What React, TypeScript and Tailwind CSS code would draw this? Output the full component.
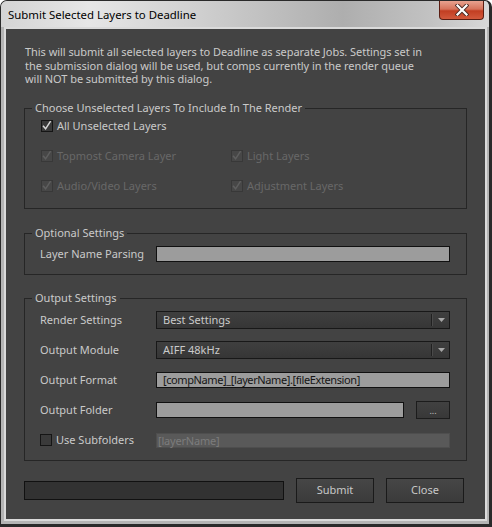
import React from "react";

function Check({ checked, disabled }: { checked?: boolean; disabled?: boolean }) {
  return (
    <span
      className={
        disabled
          ? "flex h-[12px] w-[12px] shrink-0 items-center justify-center border border-[#383838] bg-[#474747]"
          : "flex h-[12px] w-[12px] shrink-0 items-center justify-center border border-[#151515] bg-[#3a3a3a]"
      }
    >
      {checked && (
        <svg width="12" height="12" viewBox="0 0 12 12" className="overflow-visible">
          <path
            d="M2 5.8 L4.6 8.8 L9.6 1.2"
            fill="none"
            stroke={disabled ? "#5f5f5f" : "#d8d8d8"}
            strokeWidth="1.5"
          />
        </svg>
      )}
    </span>
  );
}

function CheckRow({ label, checked, disabled }: { label: string; checked?: boolean; disabled?: boolean }) {
  return (
    <div className="flex h-[16px] items-center gap-[4px]">
      <Check checked={checked} disabled={disabled} />
      <span className={disabled ? "text-[#686868]" : "text-[#cacaca]"}>{label}</span>
    </div>
  );
}

function Select({ value }: { value: string }) {
  return (
    <div className="flex h-[18px] flex-1 items-center border border-[#181818] bg-[linear-gradient(#3f3f3f,#363636)]">
      <span className="flex-1 pl-[6px] text-[#cacaca]">{value}</span>
      <span className="h-[12px] w-px bg-[#202020]" />
      <span className="h-[12px] w-px bg-[#4a4a4a]" />
      <span className="flex w-[16px] justify-center">
        <svg width="7" height="4" viewBox="0 0 7 4">
          <path d="M0 0 H7 L3.5 4 Z" fill="#a6a6a6" />
        </svg>
      </span>
    </div>
  );
}

function Group({ title, children }: { title: string; children: React.ReactNode }) {
  return (
    <fieldset className="border border-[#262626] p-0">
      <legend className="ml-[7px] px-[3px] leading-[14px] text-[#cacaca]">{title}</legend>
      {children}
    </fieldset>
  );
}

function Label({ children }: { children: React.ReactNode }) {
  return <span className="w-[116px] shrink-0 text-[#cacaca]">{children}</span>;
}

export default function App() {
  return (
    <div className="h-[527px] w-[492px] overflow-hidden rounded-t-[7px] border-x border-t border-b-[3px] border-r-[3px] border-[#2a2a2a] bg-[#b4b4b4] pb-[3px] pl-[3px] pr-[2px] font-['Noto_Sans',sans-serif] text-[11px]">
      <div className="-mx-[3px] -mr-[2px] flex h-[26px] items-start justify-between bg-[linear-gradient(to_right,#d4d4d4,#e6e6e6_18%,#d0d0d0_40%,#aeaeae_70%,#c2c2c2_88%,#d8d8d8)] pl-[7px] pr-[5px]">
        <span className="pt-[6px] text-[11.4px] leading-[16px] text-black">Submit Selected Layers to Deadline</span>
        <div className="flex h-[19px] w-[45px] items-center justify-center rounded-b-[4px] border border-t-0 border-[#5b1d12] bg-[linear-gradient(#e8a28f,#d6735b_45%,#c23e22_55%,#d2593c)]">
          <svg width="14" height="12" viewBox="0 0 14 12">
            <path d="M2.5 1.5 L11.5 10.5 M11.5 1.5 L2.5 10.5" stroke="#4a2a24" strokeWidth="4" strokeLinecap="square" />
            <path d="M2.5 1.5 L11.5 10.5 M11.5 1.5 L2.5 10.5" stroke="#ffffff" strokeWidth="2.2" strokeLinecap="square" />
          </svg>
        </div>
      </div>
      <div className="h-[494px] border-2 border-[#dadada] bg-[#434343]">
        <div className="flex flex-col px-[18px] pt-[16px]">
          <p className="ml-[1px] text-[11px] leading-[13.5px] tracking-[-0.05px] text-[#cacaca]">
            This will submit all selected layers to Deadline as separate Jobs. Settings set in
            <br />
            the submission dialog will be used, but comps currently in the render queue
            <br />
            will NOT be submitted by this dialog.
          </p>

          <div className="mt-[15.5px]">
            <Group title="Choose Unselected Layers To Include In The Render">
              <div className="flex flex-col gap-[14px] pb-[14px] pl-[16px] pt-[3px]">
                <CheckRow label="All Unselected Layers" checked />
                <div className="flex">
                  <div className="w-[190px]">
                    <CheckRow label="Topmost Camera Layer" checked disabled />
                  </div>
                  <CheckRow label="Light Layers" checked disabled />
                </div>
                <div className="flex">
                  <div className="w-[190px]">
                    <CheckRow label="Audio/Video Layers" checked disabled />
                  </div>
                  <CheckRow label="Adjustment Layers" checked disabled />
                </div>
              </div>
            </Group>
          </div>

          <div className="mt-[17px]">
            <Group title="Optional Settings">
              <div className="mb-[12px] mt-[6px] flex h-[16px] items-center pl-[15px] pr-[16px]">
                <Label>Layer Name Parsing</Label>
                <div className="h-[16px] flex-1 border border-[#101010] bg-[#9c9c9c]" />
              </div>
            </Group>
          </div>

          <div className="mt-[16px]">
            <Group title="Output Settings">
              <div className="flex flex-col gap-[12px] pb-[11px] pl-[15px] pr-[16px] pt-[6px]">
                <div className="flex h-[18px] items-center">
                  <Label>Render Settings</Label>
                  <Select value="Best Settings" />
                </div>
                <div className="flex h-[18px] items-center">
                  <Label>Output Module</Label>
                  <Select value="AIFF 48kHz" />
                </div>
                <div className="flex h-[18px] items-center">
                  <Label>Output Format</Label>
                  <div className="flex h-[16px] flex-1 items-center border border-[#101010] bg-[#9c9c9c] pl-[6px] leading-[14px] tracking-[-0.4px] text-[#151515]">
                    [compName]_[layerName].[fileExtension]
                  </div>
                </div>
                <div className="flex h-[18px] items-center">
                  <Label>Output Folder</Label>
                  <div className="h-[16px] flex-1 border border-[#101010] bg-[#9c9c9c]" />
                  <div className="ml-[12px] flex h-[18px] w-[34px] items-end justify-center border border-[#1c1c1c] bg-[linear-gradient(#414141,#383838)] pb-[3px] text-[9px] leading-[9px] text-[#c0c0c0]">
                    ...
                  </div>
                </div>
                <div className="flex h-[18px] items-center">
                  <div className="flex w-[116px] items-center gap-[4px]">
                    <Check />
                    <span className="text-[#cacaca]">Use Subfolders</span>
                  </div>
                  <div className="flex h-[15px] flex-1 items-center border border-[#4e4e4e] bg-[#595959] pl-[1px] leading-[13px] tracking-[-0.2px] text-[#7c7c7c]">
                    [layerName]
                  </div>
                </div>
              </div>
            </Group>
          </div>

          <div className="mt-[17px] flex h-[25px] items-center pr-[3px]">
            <div className="h-[19px] w-[260px] border border-[#111111] bg-[#323232]" />
            <div className="ml-[12px] flex h-[25px] w-[78px] items-center justify-center border border-[#1a1a1a] bg-[linear-gradient(#464646,#3b3b3b)] text-[#c8c8c8]">
              Submit
            </div>
            <div className="ml-[12px] flex h-[25px] w-[78px] items-center justify-center border border-[#1a1a1a] bg-[linear-gradient(#464646,#3b3b3b)] text-[#c8c8c8]">
              Close
            </div>
          </div>
        </div>
      </div>
    </div>
  );
}
